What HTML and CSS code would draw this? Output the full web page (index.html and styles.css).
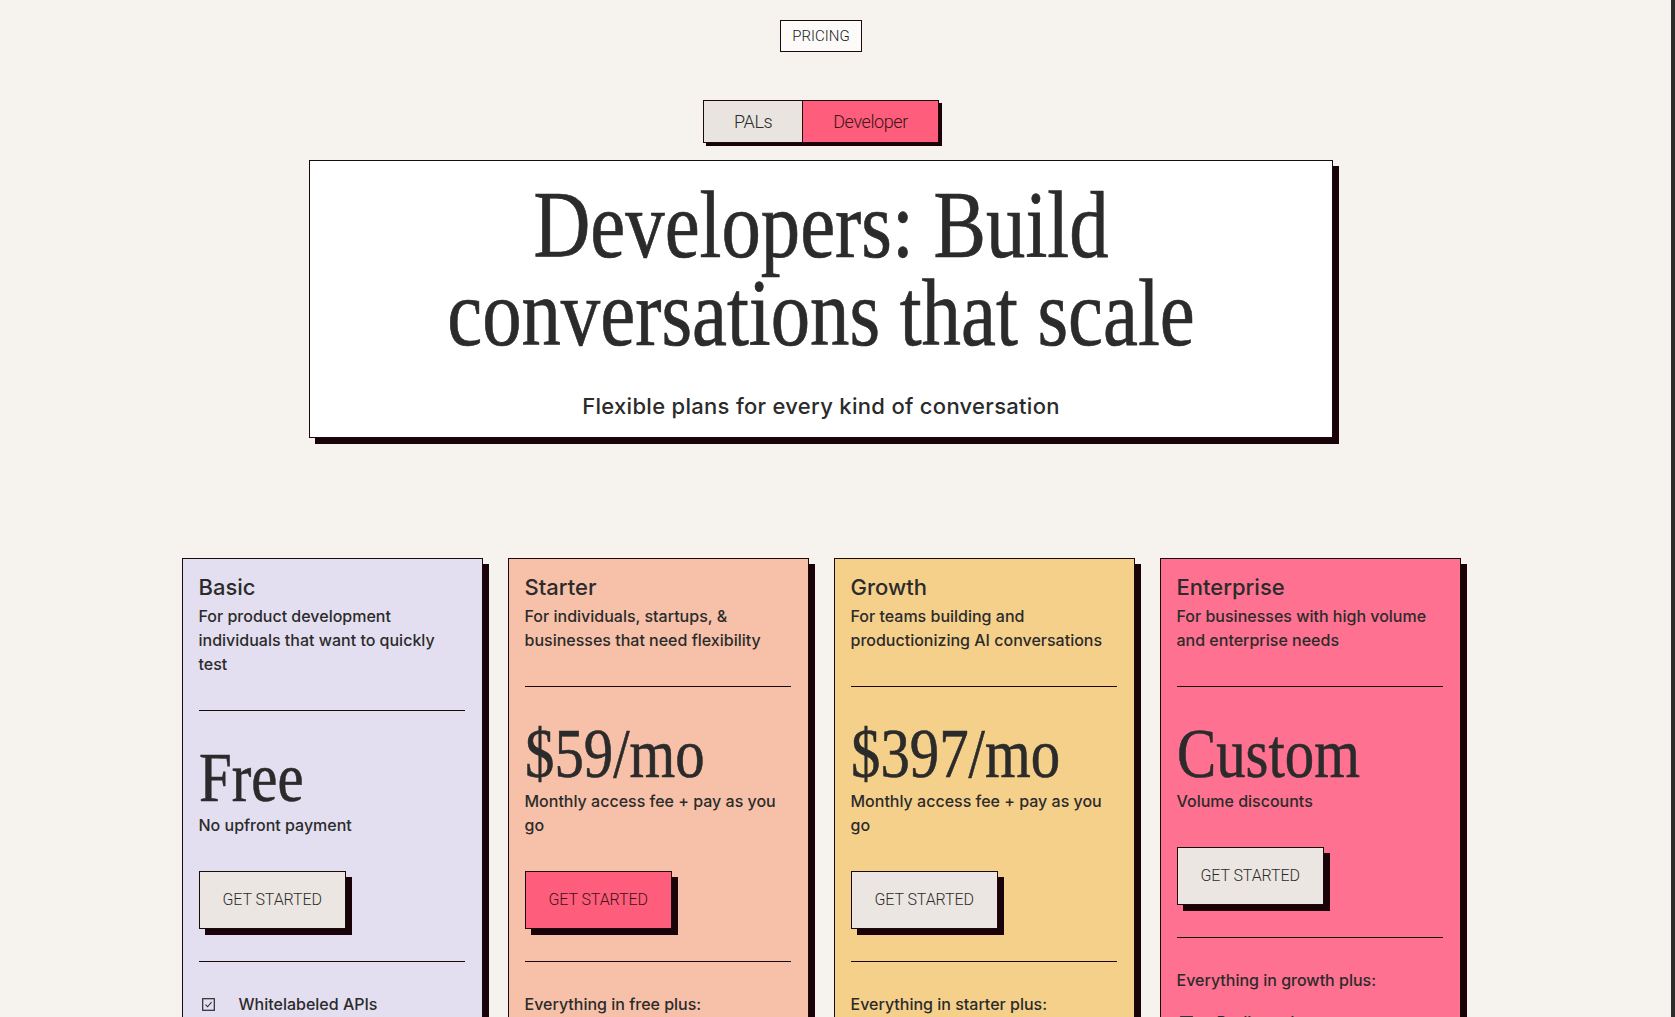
FILE: index.html
```html
<!DOCTYPE html>
<html lang="en">
<head>
  <meta charset="UTF-8" />
  <meta name="viewport" content="width=device-width, initial-scale=1" />
  <title>Pricing - Developer</title>
  <link rel="stylesheet" href="styles.css">
</head>
<body>
  <main class="page">
    <span class="eyebrow">PRICING</span>

    <div class="switch">
      <button class="switch-opt">PALs</button>
      <button class="switch-opt is-active">Developer</button>
    </div>

    <section class="hero">
      <h1 class="hero-title">Developers: Build<br>conversations that scale</h1>
      <p class="hero-sub">Flexible plans for every kind of conversation</p>
    </section>

    <section class="plans">
      <article class="plan plan-basic">
        <h3 class="plan-name">Basic</h3>
        <p class="plan-desc">For product development individuals that want to quickly test</p>
        <hr class="rule rule-top">
        <div class="price">Free</div>
        <p class="plan-desc">No upfront payment</p>
        <button class="btn">GET STARTED</button>
        <hr class="rule">
        <ul class="features">
          <li><svg class="tick" viewBox="0 0 14 14"><rect x="0.75" y="0.75" width="12.5" height="12.5" fill="none" stroke="#2b2b2b" stroke-width="1.3"/><path d="M3.8 7.2 L6 9.4 L10.3 4.4" fill="none" stroke="#2b2b2b" stroke-width="1.1"/></svg>Whitelabeled APIs</li>
          <li><svg class="tick" viewBox="0 0 14 14"><rect x="0.75" y="0.75" width="12.5" height="12.5" fill="none" stroke="#2b2b2b" stroke-width="1.3"/><path d="M3.8 7.2 L6 9.4 L10.3 4.4" fill="none" stroke="#2b2b2b" stroke-width="1.1"/></svg>Text and voice conversations</li>
          <li><svg class="tick" viewBox="0 0 14 14"><rect x="0.75" y="0.75" width="12.5" height="12.5" fill="none" stroke="#2b2b2b" stroke-width="1.3"/><path d="M3.8 7.2 L6 9.4 L10.3 4.4" fill="none" stroke="#2b2b2b" stroke-width="1.1"/></svg>Community support</li>
        </ul>
      </article>

      <article class="plan plan-starter">
        <h3 class="plan-name">Starter</h3>
        <p class="plan-desc">For individuals, startups, &amp; businesses that need flexibility</p>
        <hr class="rule rule-top">
        <div class="price">$59/mo</div>
        <p class="plan-desc">Monthly access fee + pay as you go</p>
        <button class="btn btn-pink">GET STARTED</button>
        <hr class="rule">
        <p class="plan-desc">Everything in free plus:</p>
        <ul class="features">
          <li><svg class="tick" viewBox="0 0 14 14"><rect x="0.75" y="0.75" width="12.5" height="12.5" fill="none" stroke="#2b2b2b" stroke-width="1.3"/><path d="M3.8 7.2 L6 9.4 L10.3 4.4" fill="none" stroke="#2b2b2b" stroke-width="1.1"/></svg>Custom voices</li>
          <li><svg class="tick" viewBox="0 0 14 14"><rect x="0.75" y="0.75" width="12.5" height="12.5" fill="none" stroke="#2b2b2b" stroke-width="1.3"/><path d="M3.8 7.2 L6 9.4 L10.3 4.4" fill="none" stroke="#2b2b2b" stroke-width="1.1"/></svg>Email support</li>
        </ul>
      </article>

      <article class="plan plan-growth">
        <h3 class="plan-name">Growth</h3>
        <p class="plan-desc">For teams building and productionizing AI conversations</p>
        <hr class="rule rule-top">
        <div class="price">$397/mo</div>
        <p class="plan-desc">Monthly access fee + pay as you go</p>
        <button class="btn">GET STARTED</button>
        <hr class="rule">
        <p class="plan-desc">Everything in starter plus:</p>
        <ul class="features">
          <li><svg class="tick" viewBox="0 0 14 14"><rect x="0.75" y="0.75" width="12.5" height="12.5" fill="none" stroke="#2b2b2b" stroke-width="1.3"/><path d="M3.8 7.2 L6 9.4 L10.3 4.4" fill="none" stroke="#2b2b2b" stroke-width="1.1"/></svg>Higher concurrency</li>
          <li><svg class="tick" viewBox="0 0 14 14"><rect x="0.75" y="0.75" width="12.5" height="12.5" fill="none" stroke="#2b2b2b" stroke-width="1.3"/><path d="M3.8 7.2 L6 9.4 L10.3 4.4" fill="none" stroke="#2b2b2b" stroke-width="1.1"/></svg>Priority support</li>
        </ul>
      </article>

      <article class="plan plan-enterprise">
        <h3 class="plan-name">Enterprise</h3>
        <p class="plan-desc">For businesses with high volume and enterprise needs</p>
        <hr class="rule rule-top">
        <div class="price">Custom</div>
        <p class="plan-desc">Volume discounts</p>
        <button class="btn">GET STARTED</button>
        <hr class="rule">
        <p class="plan-desc">Everything in growth plus:</p>
        <ul class="features">
          <li><svg class="tick" viewBox="0 0 14 14"><rect x="0.75" y="0.75" width="12.5" height="12.5" fill="none" stroke="#2b2b2b" stroke-width="1.3"/><path d="M3.8 7.2 L6 9.4 L10.3 4.4" fill="none" stroke="#2b2b2b" stroke-width="1.1"/></svg>Dedicated support</li>
          <li><svg class="tick" viewBox="0 0 14 14"><rect x="0.75" y="0.75" width="12.5" height="12.5" fill="none" stroke="#2b2b2b" stroke-width="1.3"/><path d="M3.8 7.2 L6 9.4 L10.3 4.4" fill="none" stroke="#2b2b2b" stroke-width="1.1"/></svg>Custom SLAs</li>
        </ul>
      </article>
    </section>
  </main>
  <div class="edge"></div>
</body>
</html>
```

FILE: styles.css
```css
html {
  scrollbar-width: none;
}

html::-webkit-scrollbar {
  display: none;
}

body {
  margin: 0;
  min-height: 100vh;
  display: flex;
  background: #f6f3ef;
  color: #2b2b2b;
  font-family: "Inter", "Liberation Sans", sans-serif;
}

.page {
  flex: 1;
  margin-right: 29px;
  padding: 20px 0 40px;
  display: flex;
  flex-direction: column;
  align-items: center;
}

.edge {
  width: 4px;
  background: #2d2d2d;
}

.eyebrow {
  font-family: "Roboto", sans-serif;
  font-size: 15px;
  font-weight: 300;
  line-height: 20px;
  padding: 5px 11px;
  border: 1px solid #1a0a0c;
  background: #fcfbf9;
  color: #222;
}

.switch {
  margin-top: 48px;
  display: flex;
  border: 1px solid #1a0a0c;
  box-shadow: 3px 3px 0 #1a0308;
}

.switch-opt {
  font-family: "Roboto", sans-serif;
  font-size: 18px;
  font-weight: 300;
  line-height: 21px;
  letter-spacing: -0.4px;
  padding: 10px 30px;
  border: none;
  background: #e9e4df;
  color: #2b2b2b;
  cursor: pointer;
}

.switch-opt + .switch-opt {
  border-left: 1px solid #1a0a0c;
}

.switch-opt.is-active {
  background: #ff5d7c;
  color: #3a1419;
}

.hero {
  margin-top: 17px;
  width: 1024px;
  box-sizing: border-box;
  padding: 20px 20px 16px;
  background: #fff;
  border: 1px solid #1a0a0c;
  box-shadow: 6px 6px 0 #1a0308;
  text-align: center;
}

.hero-title {
  margin: 0 0 34px;
  font-family: "Liberation Serif", serif;
  font-weight: 400;
  font-size: 96px;
  line-height: 88px;
  color: #2b2b2b;
  -webkit-text-stroke: 0.7px #2b2b2b;
  transform: scaleX(0.82);
}

.hero-sub {
  margin: 0;
  font-size: 22px;
  line-height: 30px;
  letter-spacing: 0.3px;
  font-weight: 500;
}

.plans {
  margin-top: 120px;
  display: grid;
  grid-template-columns: repeat(4, 301px);
  gap: 25px;
}

.plan {
  box-sizing: border-box;
  padding: 16px 17px 24px 16px;
  border: 1px solid #1a0a0c;
  box-shadow: 6px 6px 0 #1a0308;
  display: flex;
  flex-direction: column;
  align-items: flex-start;
}

.plan-basic { background: #e4dff0; }
.plan-starter { background: #f6c1a8; }
.plan-growth { background: #f5d08b; }
.plan-enterprise { background: #ff7190; }

.plan-name {
  margin: 0 0 5px;
  font-size: 22px;
  line-height: 24px;
  font-weight: 500;
}

.plan-desc {
  margin: 0;
  font-size: 16px;
  line-height: 24px;
  font-weight: 500;
}

.rule {
  align-self: stretch;
  margin: 32px 0 30px;
  border: none;
  border-top: 1px solid #1a0a0c;
}

.rule-top {
  margin: 34px 0 32px;
}

.price {
  font-family: "Liberation Serif", serif;
  font-size: 70px;
  line-height: 70px;
  -webkit-text-stroke: 0.6px #2b2b2b;
  transform: scaleX(0.84);
  transform-origin: left center;
  white-space: nowrap;
}

.btn {
  margin-top: 34px;
  font-family: "Roboto", sans-serif;
  font-size: 16px;
  font-weight: 300;
  line-height: 16px;
  letter-spacing: -0.1px;
  padding: 20px 23px;
  border: 1px solid #1a0a0c;
  background: #ebe6e1;
  color: #2b2b2b;
  box-shadow: 6px 6px 0 #1a0308;
  cursor: pointer;
}

.btn-pink {
  background: #ff5d7c;
  color: #3a1419;
}

.features {
  list-style: none;
  margin: 0;
  padding: 0;
  font-size: 16px;
  line-height: 24px;
  font-weight: 500;
}

.features li {
  display: flex;
  align-items: center;
  gap: 24px;
  margin-bottom: 14px;
}

.plan-desc + .features {
  margin-top: 18px;
}

.tick {
  width: 13px;
  height: 13px;
  margin-left: 3px;
  flex-shrink: 0;
}
```
